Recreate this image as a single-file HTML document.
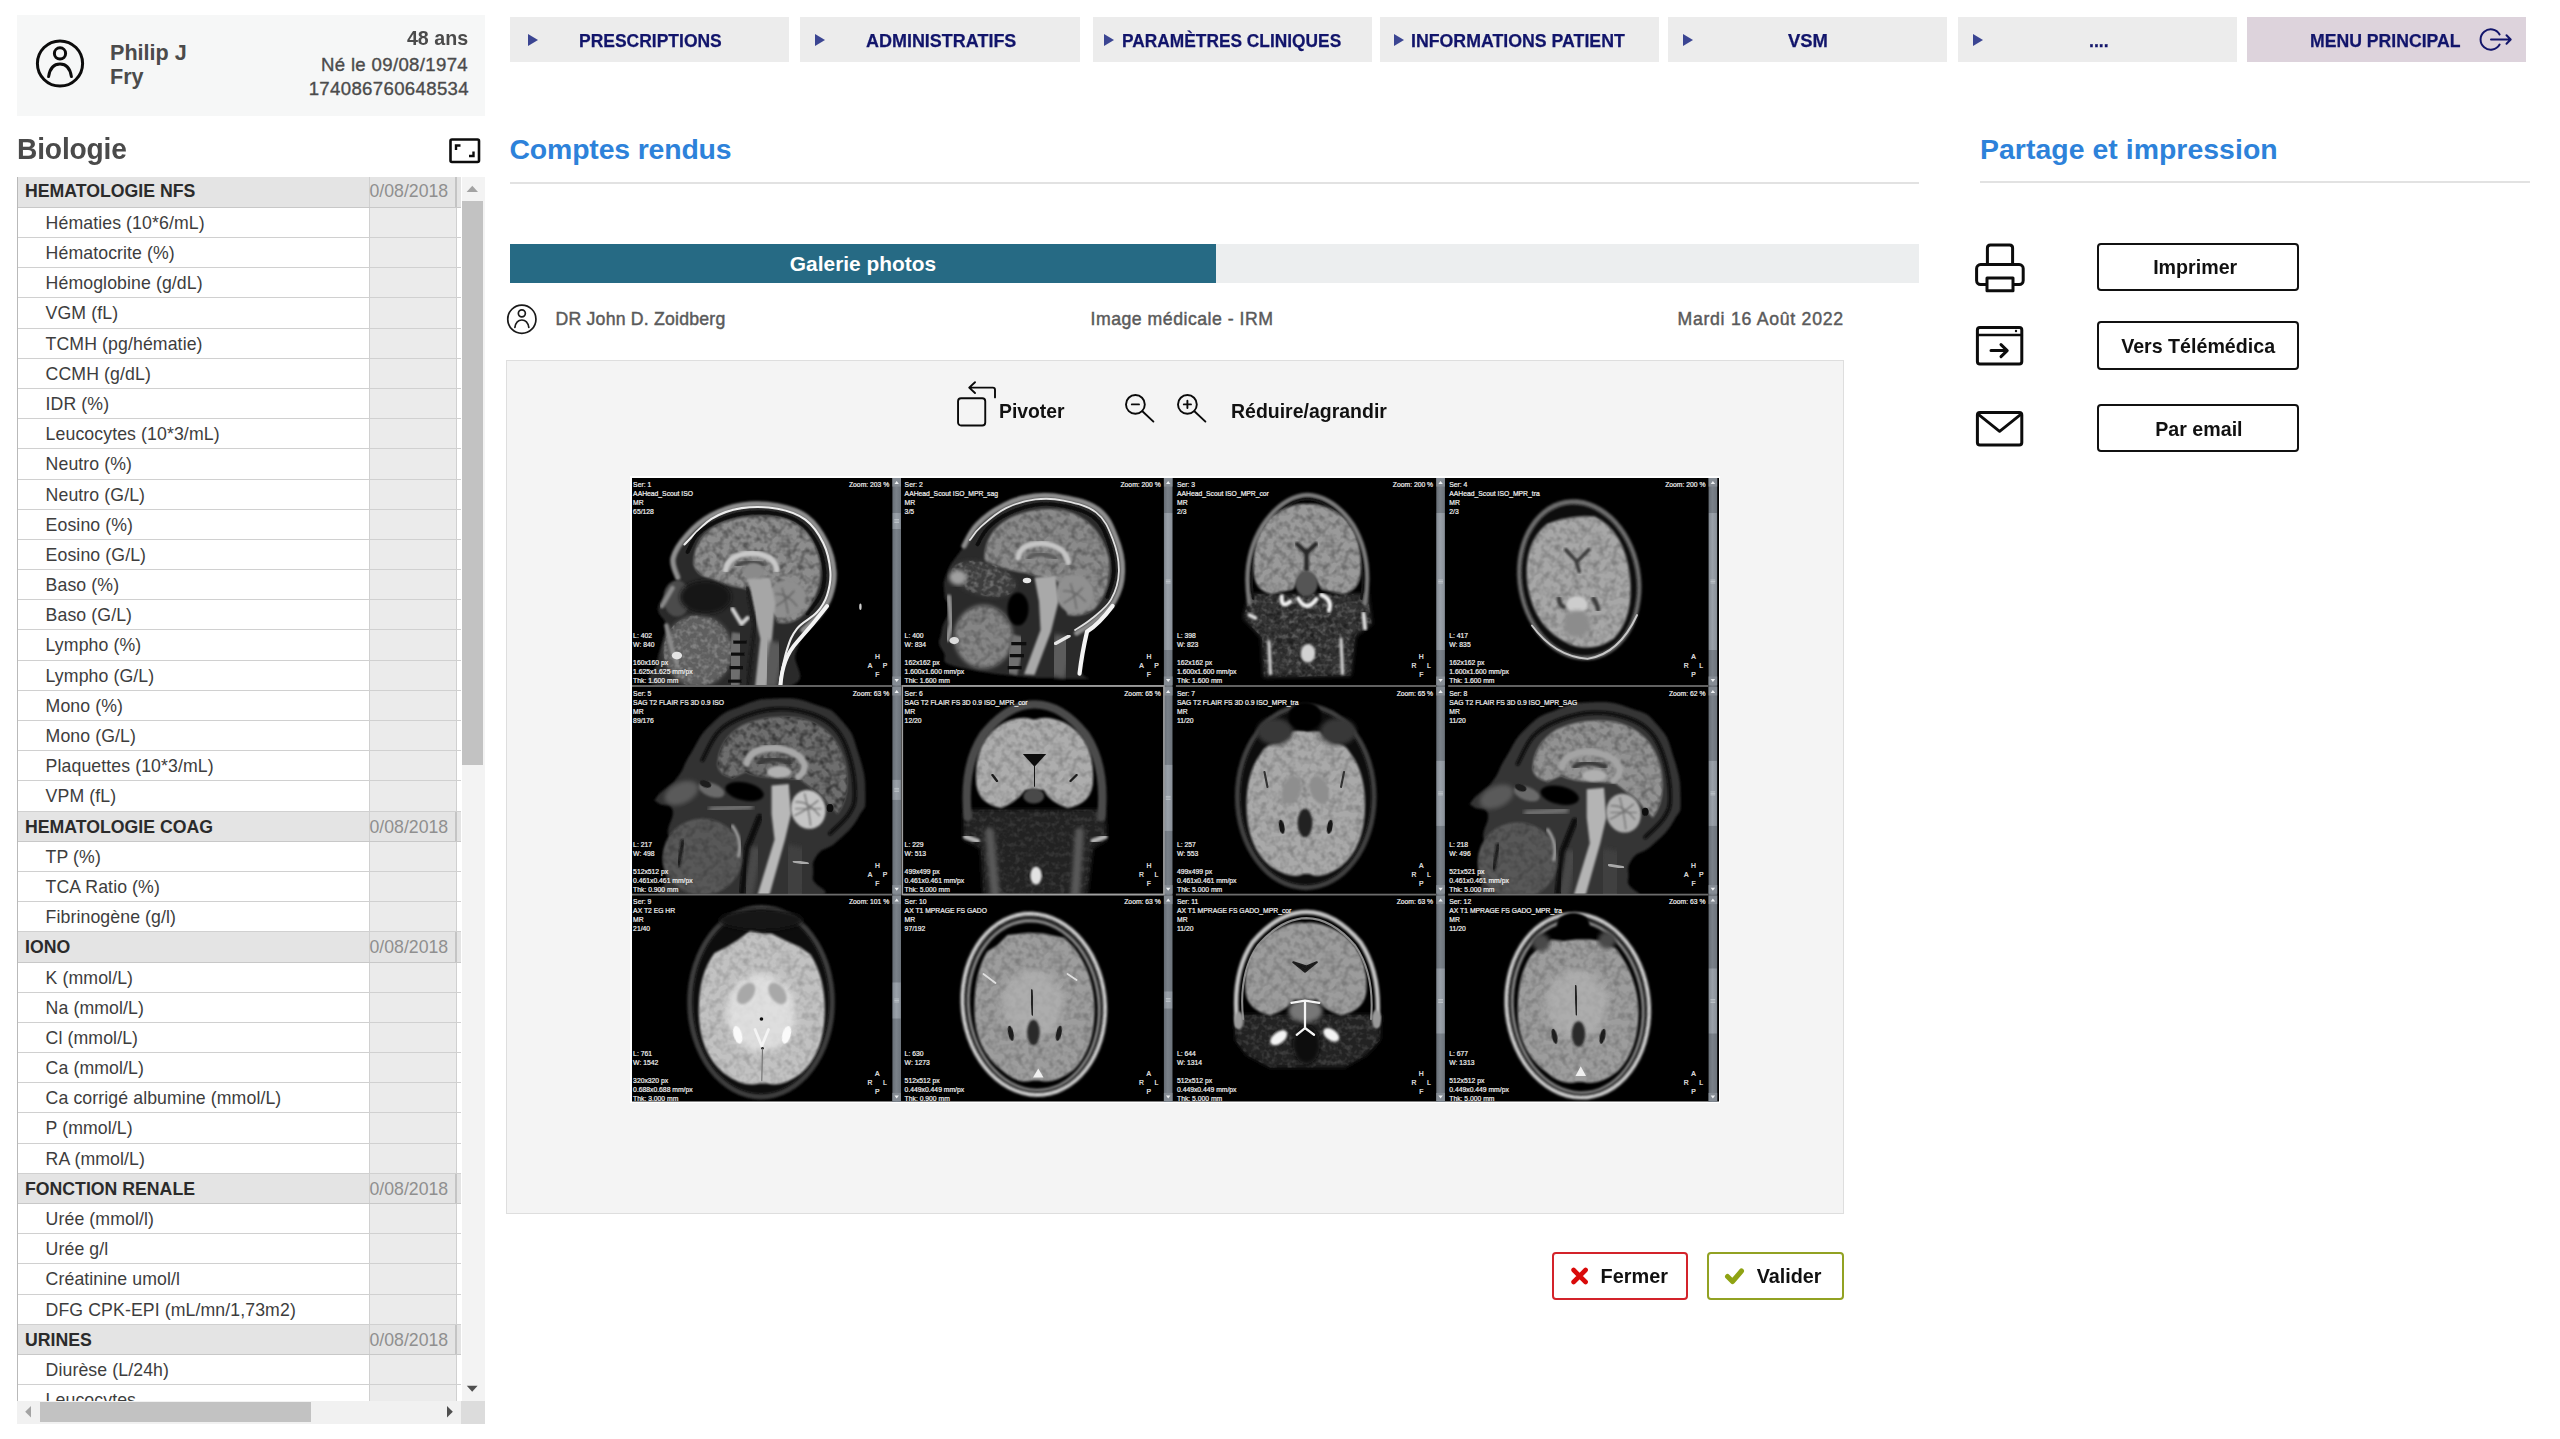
<!DOCTYPE html>
<html lang="fr">
<head>
<meta charset="utf-8">
<title>Comptes rendus</title>
<style>
*{box-sizing:border-box;margin:0;padding:0}
html,body{width:2560px;height:1439px;overflow:hidden;background:#fff}
body{font-family:"Liberation Sans",sans-serif;color:#4a4a4a;position:relative}
.abs{position:absolute}
.t{position:absolute;white-space:nowrap;line-height:1}
/* patient card */
#card{left:17px;top:15px;width:468px;height:101px;background:#f6f7f7}
/* nav */
.nav{position:absolute;top:17px;height:45px;background:#ececec;color:#12156b;font-weight:bold;font-size:18.6px;-webkit-text-stroke:.25px #12156b}
.nav .tri{position:absolute;top:16.5px;width:0;height:0;border-left:10.5px solid #3b4592;border-top:6.7px solid transparent;border-bottom:6.7px solid transparent}
.nav .lb{position:absolute;top:0;height:45px;line-height:47.4px;white-space:nowrap;display:inline-block;transform-origin:left center}
h2.ttl{position:absolute;letter-spacing:-.15px;font-size:28.4px;font-weight:bold;color:#2d82da;white-space:nowrap;line-height:1}
.hr{position:absolute;height:2px;background:#e2e2e2}
/* table */
#tbl{left:17px;top:176.9px;width:443.6px;height:1223.7px;overflow:hidden;border-left:1.3px solid #b9b9b9}
.row{position:relative;height:30.19px;border-bottom:1.3px solid #d0d0d0;font-size:17.7px;color:#3d3d3d;white-space:nowrap}
.row .n{position:absolute;left:27.6px;top:0;line-height:30.7px;letter-spacing:.1px}
.row .c{position:absolute;left:350.5px;top:0;bottom:0;width:88px;background:#ebebeb;border-left:1.3px solid #d0d0d0;border-right:1.3px solid #d0d0d0}
.row.h{background:#e4e4e4;font-weight:bold;color:#2b2b2b;border-bottom:1.3px solid #c8c8c8}
.row.h .n{left:7px;letter-spacing:0;line-height:30.4px}
.row.h .c{background:#e4e4e4;font-weight:normal;color:#8f8f8f;line-height:30.6px;text-indent:0px;border-right:2px solid #c4c4c4}
.m{font-size:17.7px;color:#5a5a5a;-webkit-text-stroke:.45px #5a5a5a;letter-spacing:.2px}
.b20{font-size:20.2px;font-weight:bold;color:#111}
.sx{display:inline-block;position:relative;transform:scaleX(.973)}
.row:first-child{height:30.95px}
.row:first-child .n,.row.h:first-child .c{line-height:29.6px}
.btn{position:absolute;border:2px solid #111;border-radius:4px;background:#fff;color:#111;font-weight:bold;font-size:20.2px;text-align:center;white-space:nowrap}
</style>
</head>
<body>

<!-- patient card -->
<div id="card" class="abs"></div>
<svg class="abs" style="left:33px;top:37px" width="54" height="54" viewBox="0 0 54 54" fill="none" stroke="#0c0c0c" stroke-width="3" stroke-linecap="round">
  <circle cx="27" cy="26.5" r="22.6"/>
  <circle cx="27" cy="16.4" r="5.6"/>
  <path d="M15.6 39.6 C16.8 31.5 21 27 27 27 C33 27 37.2 31.5 38.4 39.6"/>
</svg>
<div class="t" style="left:110px;top:40.5px;font-size:21.6px;font-weight:bold;line-height:24px;white-space:normal;width:120px;color:#4b4b4b">Philip J<br>Fry</div>
<div class="t" style="right:2092px;top:28px;font-size:20.6px;font-weight:bold;color:#4b4b4b;transform:scaleX(.955);transform-origin:right center">48 ans</div>
<div class="t" style="right:2092px;top:55.5px;font-size:18.6px;color:#4b4b4b;-webkit-text-stroke:.35px #4b4b4b;letter-spacing:.34px">Né le 09/08/1974</div>
<div class="t" style="right:2091px;top:80px;font-size:18.6px;color:#4b4b4b;-webkit-text-stroke:.35px #4b4b4b;letter-spacing:.35px">174086760648534</div>

<!-- nav -->
<div class="nav" style="left:510px;width:279px"><i class="tri" style="left:18px"></i><span class="lb" style="left:68.5px;transform:scaleX(.94)">PRESCRIPTIONS</span></div>
<div class="nav" style="left:800px;width:279.5px"><i class="tri" style="left:15px"></i><span class="lb" style="left:66.2px;transform:scaleX(.966)">ADMINISTRATIFS</span></div>
<div class="nav" style="left:1093px;width:279px"><i class="tri" style="left:10.5px"></i><span class="lb" style="left:29px;transform:scaleX(.932)">PARAMÈTRES CLINIQUES</span></div>
<div class="nav" style="left:1379.5px;width:279px"><i class="tri" style="left:14.5px"></i><span class="lb" style="left:31.5px;transform:scaleX(.954)">INFORMATIONS PATIENT</span></div>
<div class="nav" style="left:1668px;width:279px"><i class="tri" style="left:15px"></i><span class="lb" style="left:120px;transform:scaleX(.99)">VSM</span></div>
<div class="nav" style="left:1958.4px;width:278.8px"><i class="tri" style="left:15px"></i><span class="lb" style="left:130.5px;transform:scaleX(.95)">....</span></div>
<div class="nav" style="left:2247px;width:278.8px;background:#ddd3dc"><span class="lb" style="left:63.4px;transform:scaleX(.948)">MENU PRINCIPAL</span>
  <svg class="abs" style="left:230px;top:10px" width="38" height="26" viewBox="0 0 38 26" fill="none" stroke="#12156b" stroke-width="2" stroke-linecap="round" stroke-linejoin="round">
    <path d="M22.6 7.4 A10.2 10.2 0 1 0 22.6 17.6"/>
    <path d="M14 12.5 H33.5 M29.5 8.3 L33.7 12.5 L29.5 16.7"/>
  </svg>
</div>

<!-- left: Biologie -->
<h2 class="ttl" style="left:17px;top:134px;color:#4a4a4a;font-size:29.4px;transform:scaleX(.957);transform-origin:left center">Biologie</h2>
<svg class="abs" style="left:449px;top:138px" width="32" height="26" viewBox="0 0 32 26" fill="none" stroke="#0c0c0c">
  <rect x="1.5" y="1.5" width="28.5" height="22.5" rx="1.5" stroke-width="2.6"/>
  <path d="M7 12 V7.5 H11.5 M24.5 13.5 V18 H20" stroke-width="2.4"/>
</svg>

<div id="tbl" class="abs">
<div class="row h"><span class="n">HEMATOLOGIE NFS</span><span class="c">0/08/2018</span></div>
<div class="row"><span class="n">Hématies (10*6/mL)</span><span class="c"></span></div>
<div class="row"><span class="n">Hématocrite (%)</span><span class="c"></span></div>
<div class="row"><span class="n">Hémoglobine (g/dL)</span><span class="c"></span></div>
<div class="row"><span class="n">VGM (fL)</span><span class="c"></span></div>
<div class="row"><span class="n">TCMH (pg/hématie)</span><span class="c"></span></div>
<div class="row"><span class="n">CCMH (g/dL)</span><span class="c"></span></div>
<div class="row"><span class="n">IDR (%)</span><span class="c"></span></div>
<div class="row"><span class="n">Leucocytes (10*3/mL)</span><span class="c"></span></div>
<div class="row"><span class="n">Neutro (%)</span><span class="c"></span></div>
<div class="row"><span class="n">Neutro (G/L)</span><span class="c"></span></div>
<div class="row"><span class="n">Eosino (%)</span><span class="c"></span></div>
<div class="row"><span class="n">Eosino (G/L)</span><span class="c"></span></div>
<div class="row"><span class="n">Baso (%)</span><span class="c"></span></div>
<div class="row"><span class="n">Baso (G/L)</span><span class="c"></span></div>
<div class="row"><span class="n">Lympho (%)</span><span class="c"></span></div>
<div class="row"><span class="n">Lympho (G/L)</span><span class="c"></span></div>
<div class="row"><span class="n">Mono (%)</span><span class="c"></span></div>
<div class="row"><span class="n">Mono (G/L)</span><span class="c"></span></div>
<div class="row"><span class="n">Plaquettes (10*3/mL)</span><span class="c"></span></div>
<div class="row"><span class="n">VPM (fL)</span><span class="c"></span></div>
<div class="row h"><span class="n">HEMATOLOGIE COAG</span><span class="c">0/08/2018</span></div>
<div class="row"><span class="n">TP (%)</span><span class="c"></span></div>
<div class="row"><span class="n">TCA Ratio (%)</span><span class="c"></span></div>
<div class="row"><span class="n">Fibrinogène (g/l)</span><span class="c"></span></div>
<div class="row h"><span class="n">IONO</span><span class="c">0/08/2018</span></div>
<div class="row"><span class="n">K (mmol/L)</span><span class="c"></span></div>
<div class="row"><span class="n">Na (mmol/L)</span><span class="c"></span></div>
<div class="row"><span class="n">Cl (mmol/L)</span><span class="c"></span></div>
<div class="row"><span class="n">Ca (mmol/L)</span><span class="c"></span></div>
<div class="row"><span class="n">Ca corrigé albumine (mmol/L)</span><span class="c"></span></div>
<div class="row"><span class="n">P (mmol/L)</span><span class="c"></span></div>
<div class="row"><span class="n">RA (mmol/L)</span><span class="c"></span></div>
<div class="row h"><span class="n">FONCTION RENALE</span><span class="c">0/08/2018</span></div>
<div class="row"><span class="n">Urée (mmol/l)</span><span class="c"></span></div>
<div class="row"><span class="n">Urée g/l</span><span class="c"></span></div>
<div class="row"><span class="n">Créatinine umol/l</span><span class="c"></span></div>
<div class="row"><span class="n">DFG CPK-EPI (mL/mn/1,73m2)</span><span class="c"></span></div>
<div class="row h"><span class="n">URINES</span><span class="c">0/08/2018</span></div>
<div class="row"><span class="n">Diurèse (L/24h)</span><span class="c"></span></div>
<div class="row"><span class="n">Leucocytes</span><span class="c"></span></div>
</div>


<!-- scrollbars -->
<div class="abs" style="left:462px;top:177px;width:22.5px;height:1224px;background:#f3f3f3"></div>
<div class="abs" style="left:462px;top:200.5px;width:20.7px;height:564.7px;background:#c2c2c2"></div>
<svg class="abs" style="left:466px;top:185px" width="13" height="8" viewBox="0 0 13 8"><path d="M6.3 0.8 L12 7 H0.6 Z" fill="#a3a3a3"/></svg>
<svg class="abs" style="left:466px;top:1384.5px" width="13" height="8" viewBox="0 0 13 8"><path d="M0.8 0.8 H11.6 L6.2 6.8 Z" fill="#4f4f4f"/></svg>
<div class="abs" style="left:16.5px;top:1400.7px;width:468px;height:23px;background:#f1f1f1"></div>
<div class="abs" style="left:461px;top:1400.7px;width:23.5px;height:23px;background:#dcdcdc"></div>
<div class="abs" style="left:40px;top:1402.2px;width:271px;height:20px;background:#c2c2c2"></div>
<svg class="abs" style="left:24px;top:1405px" width="8" height="14" viewBox="0 0 8 14"><path d="M7 1 V12.4 L1.2 6.7 Z" fill="#a3a3a3"/></svg>
<svg class="abs" style="left:445.5px;top:1405px" width="8" height="14" viewBox="0 0 8 14"><path d="M1 1 V12.4 L6.8 6.7 Z" fill="#4f4f4f"/></svg>

<!-- center -->
<h2 class="ttl" style="left:509.5px;top:134.5px">Comptes rendus</h2>
<div class="hr" style="left:510px;top:181.5px;width:1409px"></div>


<!-- tab bar -->
<div class="abs" style="left:510px;top:243.5px;width:1409px;height:39.5px;background:#eceeef"></div>
<div class="abs" style="left:510px;top:243.5px;width:706px;height:39.5px;background:#266a84;color:#fff;font-weight:bold;font-size:20.9px;text-align:center;line-height:39.4px">Galerie photos</div>

<!-- doctor row -->
<svg class="abs" style="left:506px;top:304px" width="32" height="32" viewBox="0 0 32 32" fill="none" stroke="#1a1a1a" stroke-width="1.7" stroke-linecap="round">
  <circle cx="15.85" cy="15.2" r="14.1"/>
  <circle cx="15.85" cy="9.3" r="3.5"/>
  <path d="M8.9 23.4 C9.7 18.6 12.2 16 15.85 16 C19.5 16 22 18.6 22.8 23.4"/>
</svg>
<div class="t m" style="left:555.5px;top:310.6px">DR John D. Zoidberg</div>
<div class="t m" style="left:1090.5px;top:311px;letter-spacing:.5px">Image médicale - IRM</div>
<div class="t m" style="right:716.2px;top:311px;letter-spacing:.72px">Mardi 16 Août 2022</div>

<!-- viewer panel -->
<div class="abs" style="left:506px;top:360px;width:1337.6px;height:853.7px;background:#f4f4f4;border:1.3px solid #dedede"></div>

<!-- toolbar -->
<svg class="abs" style="left:954px;top:379.3px" width="46" height="52" viewBox="0 0 46 52" fill="none" stroke="#0a0a0a" stroke-width="1.9" stroke-linecap="round" stroke-linejoin="round">
  <rect x="4.05" y="19.2" width="27.2" height="27.3" rx="3"/>
  <path d="M41 18.4 V10.8 Q41 8.6 38.8 8.6 H15.6 M21 3.2 L15.2 8.6 L21 14"/>
</svg>
<div class="t b20" style="left:999px;top:400.9px;transform:scaleX(.958);transform-origin:left center">Pivoter</div>
<svg class="abs" style="left:1122px;top:390px" width="36" height="36" viewBox="0 0 36 36" fill="none" stroke="#0a0a0a" stroke-width="1.9" stroke-linecap="round">
  <circle cx="13.4" cy="14.4" r="9.4"/><path d="M20.4 21.2 L31.4 31.6 M9.8 14.4 H17"/>
</svg>
<svg class="abs" style="left:1173.5px;top:390px" width="36" height="36" viewBox="0 0 36 36" fill="none" stroke="#0a0a0a" stroke-width="1.9" stroke-linecap="round">
  <circle cx="13.4" cy="14.4" r="9.4"/><path d="M20.4 21.2 L31.4 31.6 M9.8 14.4 H17 M13.4 10.8 V18"/>
</svg>
<div class="t b20" style="left:1231px;top:400.9px;transform:scaleX(.965);transform-origin:left center">Réduire/agrandir</div>

<!-- MRI -->
<div id="mri" class="abs" style="left:630px;top:476.4px;width:1090.2px;height:626.9px;background:#fff;overflow:hidden">
<svg class="abs" style="left:1.6px;top:1.7px" width="1087.2" height="623.5" viewBox="0 0 1087.2 623.5" font-family="Liberation Sans, sans-serif">

<defs>
<filter id="b1" x="-10%" y="-10%" width="120%" height="120%"><feGaussianBlur stdDeviation="7"/></filter>
<filter id="b2" x="-10%" y="-10%" width="120%" height="120%"><feGaussianBlur stdDeviation="14"/></filter>
<filter id="b0" x="-10%" y="-10%" width="120%" height="120%"><feGaussianBlur stdDeviation="3.5"/></filter>
<filter id="b3" x="-20%" y="-20%" width="140%" height="140%"><feGaussianBlur stdDeviation="26"/></filter>
<filter id="tx" x="0" y="0" width="100%" height="100%"><feTurbulence type="fractalNoise" baseFrequency="0.022" numOctaves="2" seed="7"/><feColorMatrix values="0 0 0 0 0  0 0 0 0 0  0 0 0 0 0  2.4 0 0 0 -0.95"/><feComposite in2="SourceGraphic" operator="in"/><feGaussianBlur stdDeviation="5"/></filter>
<filter id="tx2" x="0" y="0" width="100%" height="100%"><feTurbulence type="fractalNoise" baseFrequency="0.03" numOctaves="2" seed="11"/><feColorMatrix values="0 0 0 0 1  0 0 0 0 1  0 0 0 0 1  2.8 0 0 0 -1.2"/><feComposite in2="SourceGraphic" operator="in"/><feGaussianBlur stdDeviation="5"/></filter>
<linearGradient id="sbg" x1="0" x2="1" y1="0" y2="0"><stop offset="0" stop-color="#666d75"/><stop offset=".45" stop-color="#7a8189"/><stop offset="1" stop-color="#6c737b"/></linearGradient>
<linearGradient id="sbt" x1="0" x2="1" y1="0" y2="0"><stop offset="0" stop-color="#858c94"/><stop offset=".45" stop-color="#9aa1a9"/><stop offset="1" stop-color="#8a9199"/></linearGradient>
</defs>

<rect width="1087.2" height="623.5" fill="#000"/>
<clipPath id="c00"><rect x="0" y="0" width="260.4" height="207.1"/></clipPath>
<g transform="translate(0,0)">
<g clip-path="url(#c00)"><g transform="scale(0.15013) translate(-30.6,-27.3)"><path d="M330 700 C349 636 286 620 300 560 C314 500 348 458 400 400 C452 342 488 310 560 270 C632 230 672 213 760 200 C848 187 912 189 1000 205 C1088 221 1134 231 1200 280 C1266 329 1293 376 1330 450 C1367 524 1379 576 1385 650 C1391 724 1379 762 1360 820 C1341 878 1324 896 1290 940 C1256 984 1224 988 1190 1040 C1156 1092 1146 1124 1120 1200 C1094 1276 1239 1376 1060 1420 C881 1464 397 1454 225 1420 C53 1386 197 1314 200 1250 C203 1186 229 1150 240 1100 C251 1050 262 1044 255 1000 C248 956 190 940 205 880 C220 820 311 764 330 700 Z" fill="#2b2b2b" filter="url(#b1)"/><path d="M335 690 C330 666 293 612 305 560 C317 508 353 457 400 405 C447 353 494 313 560 277 C626 241 679 220 760 208 C841 196 920 198 1000 213 C1080 228 1136 244 1195 288 C1254 332 1289 389 1322 455 C1355 521 1370 584 1375 650 C1380 716 1367 763 1350 815 C1333 867 1313 894 1280 935 C1247 976 1190 1021 1170 1040" fill="none" stroke="#8e8e8e" stroke-width="36" stroke-linecap="round" stroke-linejoin="round" filter="url(#b1)"/><path d="M380 470 C413 439 490 344 560 300 C630 256 679 240 760 228 C841 216 922 218 1000 232 C1078 246 1129 263 1185 305 C1241 347 1274 399 1305 462 C1336 525 1347 587 1352 650 C1357 713 1346 758 1330 808 C1314 858 1299 881 1262 922 C1225 963 1167 983 1130 1030 C1093 1077 1082 1110 1060 1180 C1038 1250 1019 1368 1010 1410" fill="none" stroke="#ededed" stroke-width="14" stroke-linecap="round" stroke-linejoin="round" filter="url(#b0)"/><path d="M1330 880 Q1230 1010 1130 1120 T1020 1410" fill="none" stroke="#f4f4f4" stroke-width="26" stroke-linecap="round" stroke-linejoin="round" filter="url(#b0)"/><path d="M400 520 C413 498 433 438 470 400 C507 362 543 340 600 315 C657 290 708 271 780 262 C852 253 920 252 990 265 C1060 278 1109 296 1160 335 C1211 374 1242 422 1270 480 C1298 538 1308 591 1312 650 C1316 709 1311 749 1290 800 C1269 851 1216 906 1200 930" fill="none" stroke="#101010" stroke-width="26" stroke-linecap="round" stroke-linejoin="round" filter="url(#b0)"/><path d="M440 600 Q440 400 640 320 Q820 260 1020 290 Q1240 340 1285 600 Q1300 780 1180 930 Q1100 1010 1000 990 L930 800 L760 760 Q640 740 560 700 Q460 680 440 600 Z" fill="#8d8d8d" filter="url(#b1)"/><path d="M440 600 Q440 400 640 320 Q820 260 1020 290 Q1240 340 1285 600 Q1300 780 1180 930 Q1100 1010 1000 990 L930 800 L760 760 Q640 740 560 700 Q460 680 440 600 Z" fill="#000" filter="url(#tx)" opacity="0.38"/><path d="M655 640 Q670 535 830 528 Q985 540 995 640" fill="none" stroke="#c9c9c9" stroke-width="38" stroke-linecap="round" stroke-linejoin="round" filter="url(#b1)"/><path d="M730 610 Q800 570 900 600" fill="none" stroke="#4a4a4a" stroke-width="30" stroke-linecap="round" stroke-linejoin="round" filter="url(#b1)"/><ellipse cx="840" cy="650" rx="70" ry="55" fill="#8a8a8a" filter="url(#b1)"/><ellipse cx="1060" cy="830" rx="130" ry="120" fill="#8e8e8e" transform="rotate(-30 1060 830)" filter="url(#b1)"/><path d="M985 800 Q1060 790 1130 880 M990 880 Q1060 840 1110 780 M1030 760 Q1060 850 1070 930" fill="none" stroke="#5e5e5e" stroke-width="8" stroke-linecap="round" stroke-linejoin="round" filter="url(#b1)"/><path d="M800 700 L950 690 L985 860 L965 1080 L930 1420 L850 1420 L885 1100 L840 900 Z" fill="#a6a6a6" filter="url(#b1)"/><path d="M800 760 L850 1000 L800 1420" fill="none" stroke="#1a1a1a" stroke-width="26" stroke-linecap="round" stroke-linejoin="round" filter="url(#b1)"/><ellipse cx="470" cy="1180" rx="230" ry="240" fill="#5e5e5e" filter="url(#b2)"/><ellipse cx="470" cy="1180" rx="230" ry="240" fill="#fff" filter="url(#tx2)" opacity="0.22"/><ellipse cx="330" cy="830" rx="90" ry="120" fill="#4c4c4c" filter="url(#b1)"/><ellipse cx="520" cy="820" rx="170" ry="110" fill="#161616" filter="url(#b2)"/><path d="M230 880 L300 760 M260 1010 L300 1180 L330 1260" fill="none" stroke="#8a8a8a" stroke-width="30" stroke-linecap="round" stroke-linejoin="round" filter="url(#b1)"/><path d="M700 900 L760 1000 L800 960" fill="none" stroke="#d0d0d0" stroke-width="28" stroke-linecap="round" stroke-linejoin="round" filter="url(#b1)"/><ellipse cx="330" cy="1210" rx="34" ry="26" fill="#e4e4e4" filter="url(#b0)"/><path d="M740 1060 L700 1420" fill="none" stroke="#6e6e6e" stroke-width="90" stroke-linecap="butt" stroke-linejoin="round" filter="url(#b1)"/><path d="M705 1120 h90 M690 1200 h90 M680 1290 h90 M670 1380 h90" fill="none" stroke="#111" stroke-width="22" stroke-linecap="butt" stroke-linejoin="round" filter="url(#b0)"/><path d="M1000 1120 L940 1420" fill="none" stroke="#5a5a5a" stroke-width="110" stroke-linecap="butt" stroke-linejoin="round" filter="url(#b2)"/><ellipse cx="1552" cy="885" rx="8" ry="22" fill="#cfcfcf" filter="url(#b0)"/></g></g>
<g transform="scale(0.87 1)" font-size="7.8" fill="#f2f2f2" stroke="#f2f2f2" stroke-width=".22"><text x="1.3" y="9.0">Ser: 1</text><text x="1.3" y="17.9">AAHead_Scout ISO</text><text x="1.3" y="26.9">MR</text><text x="1.3" y="35.9">65/128</text><text x="295.7" y="9" text-anchor="end">Zoom: 203 %</text><text x="1.3" y="160.4">L: 402</text><text x="1.3" y="169.4">W: 840</text><text x="1.3" y="187.5">160x160 px</text><text x="1.3" y="196.5">1.625x1.625 mm/px</text><text x="1.3" y="205.4">Thk: 1.600 mm</text><text x="282.0" y="181" text-anchor="middle">H</text><text x="273.6" y="190" text-anchor="middle">A</text><text x="290.8" y="190" text-anchor="middle">P</text><text x="282.0" y="199" text-anchor="middle">F</text></g>
<rect x="260.4" y="0" width="8.6" height="208.9" fill="url(#sbg)"/><rect x="260.4" y="0" width="8.6" height="8.6" fill="#858c94"/><path d="M262.5 6 L264.7 3 L266.9 6 Z" fill="#eef0f2"/><rect x="260.4" y="198.5" width="8.6" height="8.6" fill="#858c94"/><path d="M262.5 201.1 L264.7 204.1 L266.9 201.1 Z" fill="#eef0f2"/><rect x="260.7" y="35" width="8.0" height="16" fill="url(#sbt)"/><path d="M262.29999999999995 41.5 h4.8 M262.29999999999995 43.0 h4.8 M262.29999999999995 44.5 h4.8" stroke="#d4d8dc" stroke-width=".6"/>
<rect x="0" y="207.1" width="260.4" height="1.8" fill="#6c6c6c"/>
</g>
<clipPath id="c01"><rect x="0" y="0" width="260.4" height="207.1"/></clipPath>
<g transform="translate(271.5,0)">
<g clip-path="url(#c01)"><g transform="scale(0.15013) translate(-27.3,-27.3)"><path d="M430 480 C483 395 448 405 520 330 C592 255 599 251 700 200 C801 149 793 153 900 140 C1007 127 985 126 1100 150 C1215 174 1237 158 1330 230 C1423 302 1406 308 1450 420 C1494 532 1498 535 1495 650 C1492 765 1492 759 1440 850 C1388 941 1353 929 1300 990 C1247 1051 1263 997 1240 1080 C1217 1163 1236 1224 1215 1300 C1194 1376 1364 1365 1160 1365 C956 1365 682 1349 450 1300 C218 1251 335 1247 290 1180 C245 1113 269 1125 280 1050 C291 975 325 967 330 900 C335 833 303 867 300 800 C297 733 285 735 320 650 C355 565 377 565 430 480 Z" fill="#2b2b2b" filter="url(#b1)"/><path d="M430 480 C446 453 470 385 520 335 C570 285 630 241 700 207 C770 173 827 157 900 148 C973 139 1022 142 1100 158 C1178 174 1262 189 1325 238 C1388 287 1412 348 1442 424 C1472 500 1488 573 1486 650 C1484 727 1467 785 1432 846 C1397 907 1342 943 1296 982 C1250 1021 1201 1046 1180 1060" fill="none" stroke="#8e8e8e" stroke-width="34" stroke-linecap="round" stroke-linejoin="round" filter="url(#b1)"/><path d="M470 440 C484 424 501 389 545 350 C589 311 644 261 710 228 C776 195 834 179 905 170 C976 161 1021 162 1095 178 C1169 194 1250 209 1310 256 C1370 303 1392 360 1420 432 C1448 504 1464 576 1462 650 C1460 724 1443 778 1410 836 C1377 894 1324 928 1280 965 C1236 1002 1190 1026 1170 1040" fill="none" stroke="#e2e2e2" stroke-width="12" stroke-linecap="round" stroke-linejoin="round" filter="url(#b0)"/><path d="M1420 880 Q1330 1000 1250 1050 Q1215 1200 1200 1330" fill="none" stroke="#f4f4f4" stroke-width="28" stroke-linecap="round" stroke-linejoin="round" filter="url(#b0)"/><path d="M520 470 C533 450 552 398 590 360 C628 322 671 290 730 262 C789 234 845 214 910 205 C975 196 1015 197 1085 212 C1155 227 1234 242 1290 285 C1346 328 1365 378 1390 445 C1415 512 1429 581 1428 650 C1427 719 1393 789 1385 820" fill="none" stroke="#0c0c0c" stroke-width="24" stroke-linecap="round" stroke-linejoin="round" filter="url(#b0)"/><path d="M565 560 Q570 380 740 290 Q900 215 1090 240 Q1330 300 1395 560 Q1420 760 1300 900 Q1220 960 1120 940 L1060 720 L840 660 Q700 640 640 610 Q570 600 565 560 Z" fill="#8a8a8a" filter="url(#b1)"/><path d="M565 560 Q570 380 740 290 Q900 215 1090 240 Q1330 300 1395 560 Q1420 760 1300 900 Q1220 960 1120 940 L1060 720 L840 660 Q700 640 640 610 Q570 600 565 560 Z" fill="#000" filter="url(#tx)" opacity="0.3"/><path d="M790 560 Q800 465 950 462 Q1110 480 1125 590" fill="none" stroke="#c6c6c6" stroke-width="36" stroke-linecap="round" stroke-linejoin="round" filter="url(#b1)"/><path d="M860 560 Q930 510 1040 560" fill="none" stroke="#5a5a5a" stroke-width="30" stroke-linecap="round" stroke-linejoin="round" filter="url(#b1)"/><ellipse cx="1170" cy="800" rx="125" ry="130" fill="#909090" transform="rotate(-20 1170 800)" filter="url(#b1)"/><path d="M1090 780 Q1170 770 1240 850 M1095 860 Q1170 820 1220 760 M1140 730 Q1170 820 1180 900" fill="none" stroke="#626262" stroke-width="8" stroke-linecap="round" stroke-linejoin="round" filter="url(#b1)"/><path d="M900 690 L1040 680 L1060 850 L1010 1050 L900 1340 L830 1335 L940 1040 L930 850 Z" fill="#a9a9a9" filter="url(#b1)"/><ellipse cx="560" cy="1085" rx="195" ry="210" fill="#858585" filter="url(#b2)"/><ellipse cx="560" cy="1085" rx="195" ry="210" fill="#000" filter="url(#tx)" opacity="0.25"/><ellipse cx="560" cy="700" rx="220" ry="110" fill="#3c3c3c" transform="rotate(15 560 700)" filter="url(#b2)"/><ellipse cx="560" cy="700" rx="220" ry="110" fill="#fff" transform="rotate(15 560 700)" filter="url(#tx2)" opacity="0.25"/><ellipse cx="390" cy="690" rx="60" ry="50" fill="#a0a0a0" filter="url(#b2)"/><ellipse cx="790" cy="900" rx="70" ry="110" fill="#050505" filter="url(#b1)"/><ellipse cx="850" cy="710" rx="28" ry="18" fill="#e8e8e8" filter="url(#b0)"/><path d="M330 820 L345 1000 L320 1100" fill="none" stroke="#909090" stroke-width="34" stroke-linecap="round" stroke-linejoin="round" filter="url(#b1)"/><ellipse cx="365" cy="1110" rx="32" ry="24" fill="#dcdcdc" filter="url(#b0)"/><path d="M800 1080 L740 1330" fill="none" stroke="#707070" stroke-width="90" stroke-linecap="butt" stroke-linejoin="round" filter="url(#b1)"/><path d="M745 1130 h100 M735 1210 h95 M720 1290 h95" fill="none" stroke="#111" stroke-width="22" stroke-linecap="butt" stroke-linejoin="round" filter="url(#b0)"/><path d="M1100 1080 L1040 1350" fill="none" stroke="#5c5c5c" stroke-width="130" stroke-linecap="butt" stroke-linejoin="round" filter="url(#b2)"/><path d="M1040 1130 L1130 1080" fill="none" stroke="#e6e6e6" stroke-width="22" stroke-linecap="round" stroke-linejoin="round" filter="url(#b0)"/></g></g>
<g transform="scale(0.87 1)" font-size="7.8" fill="#f2f2f2" stroke="#f2f2f2" stroke-width=".22"><text x="1.3" y="9.0">Ser: 2</text><text x="1.3" y="17.9">AAHead_Scout ISO_MPR_sag</text><text x="1.3" y="26.9">MR</text><text x="1.3" y="35.9">3/5</text><text x="295.7" y="9" text-anchor="end">Zoom: 200 %</text><text x="1.3" y="160.4">L: 400</text><text x="1.3" y="169.4">W: 834</text><text x="1.3" y="187.5">162x162 px</text><text x="1.3" y="196.5">1.600x1.600 mm/px</text><text x="1.3" y="205.4">Thk: 1.600 mm</text><text x="282.0" y="181" text-anchor="middle">H</text><text x="273.6" y="190" text-anchor="middle">A</text><text x="290.8" y="190" text-anchor="middle">P</text><text x="282.0" y="199" text-anchor="middle">F</text></g>
<rect x="260.4" y="0" width="8.6" height="208.9" fill="url(#sbg)"/><rect x="260.4" y="0" width="8.6" height="8.6" fill="#858c94"/><path d="M262.5 6 L264.7 3 L266.9 6 Z" fill="#eef0f2"/><rect x="260.4" y="198.5" width="8.6" height="8.6" fill="#858c94"/><path d="M262.5 201.1 L264.7 204.1 L266.9 201.1 Z" fill="#eef0f2"/><rect x="260.7" y="35" width="8.0" height="137" fill="url(#sbt)"/><path d="M262.29999999999995 102.0 h4.8 M262.29999999999995 103.5 h4.8 M262.29999999999995 105.0 h4.8" stroke="#d4d8dc" stroke-width=".6"/>
<rect x="0" y="207.1" width="260.4" height="1.8" fill="#6c6c6c"/>
</g>
<clipPath id="c02"><rect x="0" y="0" width="260.4" height="207.1"/></clipPath>
<g transform="translate(543.9,0)">
<g clip-path="url(#c02)"><g transform="scale(0.15013) translate(-30.0,-27.3)"><path d="M520 800 L1310 800 L1335 1000 L1225 1080 L1195 1345 L615 1355 L600 1090 L480 960 Z" fill="#343434" filter="url(#b2)"/><path d="M520 800 L1310 800 L1335 1000 L1225 1080 L1195 1345 L615 1355 L600 1090 L480 960 Z" fill="#fff" filter="url(#tx2)" opacity="0.2"/><path d="M520 800 L1310 800 L1335 1000 L1225 1080 L1195 1345 L615 1355 L600 1090 L480 960 Z" fill="#000" filter="url(#tx)" opacity="0.45"/><path d="M520 860 Q470 560 610 340 Q740 150 905 140 Q1080 150 1210 340 Q1340 560 1290 860" fill="none" stroke="#7c7c7c" stroke-width="30" stroke-linecap="round" stroke-linejoin="round" filter="url(#b1)"/><path d="M545 830 Q505 560 635 355 Q755 178 905 168 Q1060 178 1185 355 Q1305 560 1265 830" fill="none" stroke="#151515" stroke-width="16" stroke-linecap="round" stroke-linejoin="round" filter="url(#b0)"/><path d="M548 640 Q540 380 700 260 Q820 190 905 200 Q990 190 1110 260 Q1270 380 1262 640 Q1262 780 1140 800 L1000 770 L960 700 L850 700 L810 770 L670 800 Q548 780 548 640 Z" fill="#9a9a9a" filter="url(#b1)"/><path d="M548 640 Q540 380 700 260 Q820 190 905 200 Q990 190 1110 260 Q1270 380 1262 640 Q1262 780 1140 800 L1000 770 L960 700 L850 700 L810 770 L670 800 Q548 780 548 640 Z" fill="#000" filter="url(#tx)" opacity="0.28"/><path d="M838 468 L900 525 L962 468 M900 525 L900 640" fill="none" stroke="#262626" stroke-width="30" stroke-linecap="round" stroke-linejoin="round" filter="url(#b1)"/><ellipse cx="900" cy="730" rx="75" ry="85" fill="#555" filter="url(#b1)"/><path d="M735 815 Q730 900 790 850 M845 830 Q900 925 965 835 M1000 805 Q1075 840 1050 910" fill="none" stroke="#f2f2f2" stroke-width="28" stroke-linecap="round" stroke-linejoin="round" filter="url(#b1)"/><ellipse cx="910" cy="1195" rx="48" ry="62" fill="#d2d2d2" filter="url(#b1)"/><path d="M650 1120 L660 1330 M1130 1100 L1140 1330" fill="none" stroke="#cfcfcf" stroke-width="22" stroke-linecap="round" stroke-linejoin="round" filter="url(#b1)"/><path d="M520 940 L560 960 M1280 930 L1290 1030" fill="none" stroke="#ddd" stroke-width="26" stroke-linecap="round" stroke-linejoin="round" filter="url(#b1)"/></g></g>
<g transform="scale(0.87 1)" font-size="7.8" fill="#f2f2f2" stroke="#f2f2f2" stroke-width=".22"><text x="1.3" y="9.0">Ser: 3</text><text x="1.3" y="17.9">AAHead_Scout ISO_MPR_cor</text><text x="1.3" y="26.9">MR</text><text x="1.3" y="35.9">2/3</text><text x="295.7" y="9" text-anchor="end">Zoom: 200 %</text><text x="1.3" y="160.4">L: 398</text><text x="1.3" y="169.4">W: 823</text><text x="1.3" y="187.5">162x162 px</text><text x="1.3" y="196.5">1.600x1.600 mm/px</text><text x="1.3" y="205.4">Thk: 1.600 mm</text><text x="282.0" y="181" text-anchor="middle">H</text><text x="273.6" y="190" text-anchor="middle">R</text><text x="290.8" y="190" text-anchor="middle">L</text><text x="282.0" y="199" text-anchor="middle">F</text></g>
<rect x="260.4" y="0" width="8.6" height="208.9" fill="url(#sbg)"/><rect x="260.4" y="0" width="8.6" height="8.6" fill="#858c94"/><path d="M262.5 6 L264.7 3 L266.9 6 Z" fill="#eef0f2"/><rect x="260.4" y="198.5" width="8.6" height="8.6" fill="#858c94"/><path d="M262.5 201.1 L264.7 204.1 L266.9 201.1 Z" fill="#eef0f2"/><rect x="260.7" y="35" width="8.0" height="137" fill="url(#sbt)"/><path d="M262.29999999999995 102.0 h4.8 M262.29999999999995 103.5 h4.8 M262.29999999999995 105.0 h4.8" stroke="#d4d8dc" stroke-width=".6"/>
<rect x="0" y="207.1" width="260.4" height="1.8" fill="#6c6c6c"/>
</g>
<clipPath id="c03"><rect x="0" y="0" width="260.4" height="207.1"/></clipPath>
<g transform="translate(816.2,0)">
<g clip-path="url(#c03)"><g transform="scale(0.15013) translate(-32.0,-27.3)"><ellipse cx="905" cy="705" rx="410" ry="540" fill="#6c6c6c" transform="rotate(-10 905 705)" filter="url(#b1)"/><ellipse cx="905" cy="705" rx="388" ry="518" fill="#d0d0d0" transform="rotate(-5 905 705)" filter="url(#b1)" opacity="0.0"/><ellipse cx="905" cy="708" rx="380" ry="508" fill="#0e0e0e" transform="rotate(-10 905 708)" filter="url(#b1)"/><path d="M590 1010 Q740 1215 960 1232 Q1170 1200 1290 940" fill="none" stroke="#c8c8c8" stroke-width="13" stroke-linecap="round" stroke-linejoin="round" filter="url(#b0)"/><g transform="rotate(-7 900 720)"><path d="M560 700 Q560 420 740 310 Q900 270 1060 300 Q1245 420 1245 720 Q1240 1000 1090 1120 Q950 1200 800 1130 Q570 1000 560 700 Z" fill="#a7a7a7" filter="url(#b1)"/><path d="M560 700 Q560 420 740 310 Q900 270 1060 300 Q1245 420 1245 720 Q1240 1000 1090 1120 Q950 1200 800 1130 Q570 1000 560 700 Z" fill="#000" filter="url(#tx)" opacity="0.22"/></g><path d="M815 505 L890 585 L968 505 M885 585 L905 650" fill="none" stroke="#3a3a3a" stroke-width="24" stroke-linecap="round" stroke-linejoin="round" filter="url(#b1)"/><path d="M770 830 Q775 880 800 885 M1000 830 Q1030 880 1030 905" fill="none" stroke="#3c3c3c" stroke-width="30" stroke-linecap="round" stroke-linejoin="round" filter="url(#b1)"/><ellipse cx="890" cy="870" rx="70" ry="55" fill="#cdcdcd" filter="url(#b1)"/><ellipse cx="890" cy="1000" rx="90" ry="90" fill="#8c8c8c" filter="url(#b2)"/></g></g>
<g transform="scale(0.87 1)" font-size="7.8" fill="#f2f2f2" stroke="#f2f2f2" stroke-width=".22"><text x="1.3" y="9.0">Ser: 4</text><text x="1.3" y="17.9">AAHead_Scout ISO_MPR_tra</text><text x="1.3" y="26.9">MR</text><text x="1.3" y="35.9">2/3</text><text x="295.7" y="9" text-anchor="end">Zoom: 200 %</text><text x="1.3" y="160.4">L: 417</text><text x="1.3" y="169.4">W: 835</text><text x="1.3" y="187.5">162x162 px</text><text x="1.3" y="196.5">1.600x1.600 mm/px</text><text x="1.3" y="205.4">Thk: 1.600 mm</text><text x="282.0" y="181" text-anchor="middle">A</text><text x="273.6" y="190" text-anchor="middle">R</text><text x="290.8" y="190" text-anchor="middle">L</text><text x="282.0" y="199" text-anchor="middle">P</text></g>
<rect x="260.4" y="0" width="8.6" height="208.9" fill="url(#sbg)"/><rect x="260.4" y="0" width="8.6" height="8.6" fill="#858c94"/><path d="M262.5 6 L264.7 3 L266.9 6 Z" fill="#eef0f2"/><rect x="260.4" y="198.5" width="8.6" height="8.6" fill="#858c94"/><path d="M262.5 201.1 L264.7 204.1 L266.9 201.1 Z" fill="#eef0f2"/><rect x="260.7" y="35" width="8.0" height="137" fill="url(#sbt)"/><path d="M262.29999999999995 102.0 h4.8 M262.29999999999995 103.5 h4.8 M262.29999999999995 105.0 h4.8" stroke="#d4d8dc" stroke-width=".6"/>
<rect x="0" y="207.1" width="260.4" height="1.8" fill="#6c6c6c"/>
</g>
<clipPath id="c10"><rect x="0" y="0" width="260.4" height="206.8"/></clipPath>
<g transform="translate(0,208.9)">
<g clip-path="url(#c10)"><g transform="scale(0.15013) translate(-30.6,-33.3)"><g transform="translate(0,0)"><path d="M420 480 C481 384 469 365 560 280 C651 195 643 205 760 160 C877 115 869 113 1000 110 C1131 107 1135 110 1250 150 C1365 190 1353 172 1430 260 C1507 348 1499 349 1540 480 C1581 611 1585 638 1585 750 C1585 862 1589 817 1540 900 C1491 983 1475 991 1400 1060 C1325 1129 1304 1096 1260 1160 C1216 1224 1248 1225 1235 1300 C1222 1375 1451 1403 1210 1440 C969 1477 583 1477 330 1440 C77 1403 284 1377 260 1300 C236 1223 229 1217 240 1150 C251 1083 292 1090 300 1050 C308 1010 270 1053 270 1000 C270 947 316 901 300 850 C284 799 237 834 210 810 C183 786 168 805 200 760 C232 715 271 715 330 640 C389 565 359 576 420 480 Z" fill="#323232" filter="url(#b1)"/><path d="M500 520 C520 485 557 384 610 330 C663 276 718 252 790 225 C862 198 919 182 1000 180 C1081 178 1158 190 1230 215 C1302 240 1344 263 1390 315 C1436 367 1457 420 1480 500 C1503 580 1516 680 1515 750 C1514 820 1505 832 1475 880 C1445 928 1373 986 1350 1010" fill="none" stroke="#0a0a0a" stroke-width="26" stroke-linecap="round" stroke-linejoin="round" filter="url(#b1)"/><path d="M600 560 Q600 390 760 290 Q930 210 1150 240 Q1400 300 1455 560 Q1490 760 1400 880 L1290 760 L1150 650 L1010 640 Q860 640 790 600 L700 640 Q610 620 600 560 Z" fill="#6e6e6e" filter="url(#b1)"/><path d="M600 560 Q600 390 760 290 Q930 210 1150 240 Q1400 300 1455 560 Q1490 760 1400 880 L1290 760 L1150 650 L1010 640 Q860 640 790 600 L700 640 Q610 620 600 560 Z" fill="#000" filter="url(#tx)" opacity="0.5"/><path d="M795 540 Q820 440 980 440 Q1160 460 1180 560 Q1175 610 1140 630" fill="none" stroke="#a8a8a8" stroke-width="46" stroke-linecap="round" stroke-linejoin="round" filter="url(#b1)"/><path d="M880 540 Q960 490 1080 540" fill="none" stroke="#3a3a3a" stroke-width="34" stroke-linecap="round" stroke-linejoin="round" filter="url(#b1)"/><ellipse cx="1010" cy="600" rx="80" ry="40" fill="#b0b0b0" filter="url(#b1)"/><ellipse cx="1205" cy="850" rx="115" ry="130" fill="#c6c6c6" transform="rotate(-15 1205 850)" filter="url(#b1)"/><path d="M1120 800 Q1200 790 1280 890 M1115 890 Q1200 850 1270 790 M1180 745 Q1210 860 1220 955 M1120 845 L1290 845" fill="none" stroke="#6a6a6a" stroke-width="8" stroke-linecap="round" stroke-linejoin="round" filter="url(#b1)"/><ellipse cx="1350" cy="840" rx="22" ry="26" fill="#0a0a0a" filter="url(#b0)"/><path d="M960 690 L1075 680 L1090 880 L1050 1050 L940 1440 L860 1440 L980 1050 L960 880 Z" fill="#b8b8b8" filter="url(#b1)"/><ellipse cx="780" cy="730" rx="130" ry="60" fill="#030303" transform="rotate(12 780 730)" filter="url(#b1)"/><path d="M880 900 L800 1100 L760 1440" fill="none" stroke="#080808" stroke-width="40" stroke-linecap="round" stroke-linejoin="round" filter="url(#b1)"/><ellipse cx="360" cy="740" rx="120" ry="70" fill="#5a5a5a" transform="rotate(-25 360 740)" filter="url(#b2)"/><ellipse cx="560" cy="720" rx="90" ry="45" fill="#6a6a6a" transform="rotate(20 560 720)" filter="url(#b1)"/><ellipse cx="520" cy="680" rx="40" ry="22" fill="#1a1a1a" transform="rotate(20 520 680)" filter="url(#b0)"/><path d="M560 850 L820 830" fill="none" stroke="#777" stroke-width="40" stroke-linecap="round" stroke-linejoin="round" filter="url(#b2)"/><ellipse cx="500" cy="1165" rx="265" ry="255" fill="#585858" filter="url(#b1)"/><ellipse cx="500" cy="1165" rx="265" ry="255" fill="#000" filter="url(#tx)" opacity="0.2"/><path d="M370 1060 L340 1220" fill="none" stroke="#151515" stroke-width="22" stroke-linecap="round" stroke-linejoin="round" filter="url(#b1)"/><path d="M700 960 Q770 1060 740 1160" fill="none" stroke="#9a9a9a" stroke-width="22" stroke-linecap="round" stroke-linejoin="round" filter="url(#b1)"/><path d="M1150 1100 L1080 1440" fill="none" stroke="#404040" stroke-width="170" stroke-linecap="butt" stroke-linejoin="round" filter="url(#b2)"/><path d="M1110 1195 L1200 1210" fill="none" stroke="#aaa" stroke-width="18" stroke-linecap="round" stroke-linejoin="round" filter="url(#b0)"/><path d="M860 1100 L800 1440" fill="none" stroke="#4a4a4a" stroke-width="70" stroke-linecap="butt" stroke-linejoin="round" filter="url(#b2)"/></g></g></g>
<g transform="scale(0.87 1)" font-size="7.8" fill="#f2f2f2" stroke="#f2f2f2" stroke-width=".22"><text x="1.3" y="9.0">Ser: 5</text><text x="1.3" y="17.9">SAG T2 FLAIR FS 3D 0.9 ISO</text><text x="1.3" y="26.9">MR</text><text x="1.3" y="35.9">89/176</text><text x="295.7" y="9" text-anchor="end">Zoom: 63 %</text><text x="1.3" y="160.4">L: 217</text><text x="1.3" y="169.4">W: 498</text><text x="1.3" y="187.5">512x512 px</text><text x="1.3" y="196.5">0.461x0.461 mm/px</text><text x="1.3" y="205.4">Thk: 0.900 mm</text><text x="282.0" y="181" text-anchor="middle">H</text><text x="273.6" y="190" text-anchor="middle">A</text><text x="290.8" y="190" text-anchor="middle">P</text><text x="282.0" y="199" text-anchor="middle">F</text></g>
<rect x="260.4" y="0" width="8.6" height="208.60000000000002" fill="url(#sbg)"/><rect x="260.4" y="0" width="8.6" height="8.6" fill="#858c94"/><path d="M262.5 6 L264.7 3 L266.9 6 Z" fill="#eef0f2"/><rect x="260.4" y="198.20000000000002" width="8.6" height="8.6" fill="#858c94"/><path d="M262.5 200.8 L264.7 203.8 L266.9 200.8 Z" fill="#eef0f2"/><rect x="260.7" y="93" width="8.0" height="20" fill="url(#sbt)"/><path d="M262.29999999999995 101.5 h4.8 M262.29999999999995 103.0 h4.8 M262.29999999999995 104.5 h4.8" stroke="#d4d8dc" stroke-width=".6"/>
<rect x="0" y="206.8" width="260.4" height="1.8" fill="#6c6c6c"/>
</g>
<clipPath id="c11"><rect x="0" y="0" width="260.4" height="206.8"/></clipPath>
<g transform="translate(271.5,208.9)">
<g clip-path="url(#c11)"><g transform="scale(0.15013) translate(-27.3,-33.3)"><path d="M430 850 L1370 850 L1385 1050 L1290 1110 L1250 1440 L560 1440 L540 1110 L425 1050 Z" fill="#232323" filter="url(#b2)"/><path d="M430 850 L1370 850 L1385 1050 L1290 1110 L1250 1440 L560 1440 L540 1110 L425 1050 Z" fill="#fff" filter="url(#tx2)" opacity="0.09"/><path d="M455 900 Q420 560 560 350 Q720 150 900 150 Q1080 150 1240 350 Q1380 560 1345 900" fill="none" stroke="#4b4b4b" stroke-width="56" stroke-linecap="round" stroke-linejoin="round" filter="url(#b1)"/><path d="M510 650 Q500 380 700 270 Q820 220 890 250 L905 250 Q980 220 1100 270 Q1300 380 1290 650 Q1290 810 1120 840 Q1000 800 960 720 L840 720 Q780 800 680 840 Q510 810 510 650 Z" fill="#adadad" filter="url(#b1)"/><path d="M510 650 Q500 380 700 270 Q820 220 890 250 L905 250 Q980 220 1100 270 Q1300 380 1290 650 Q1290 810 1120 840 Q1000 800 960 720 L840 720 Q780 800 680 840 Q510 810 510 650 Z" fill="#000" filter="url(#tx)" opacity="0.2"/><path d="M895 250 L895 440" fill="none" stroke="#333" stroke-width="10" stroke-linecap="round" stroke-linejoin="round" filter="url(#b0)"/><path d="M822 480 L900 565 L978 480 Z" fill="#0c0c0c" filter="url(#b0)"/><path d="M900 565 L898 690" fill="none" stroke="#141414" stroke-width="16" stroke-linecap="round" stroke-linejoin="round" filter="url(#b0)"/><path d="M620 620 L650 660 M1180 620 L1140 660" fill="none" stroke="#1c1c1c" stroke-width="16" stroke-linecap="round" stroke-linejoin="round" filter="url(#b0)"/><path d="M800 690 L990 690" fill="none" stroke="#d8d8d8" stroke-width="14" stroke-linecap="round" stroke-linejoin="round" filter="url(#b1)"/><ellipse cx="895" cy="760" rx="70" ry="50" fill="#4a4a4a" filter="url(#b1)"/><path d="M440 1030 L520 1060 M1290 1060 L1370 1030" fill="none" stroke="#b5b5b5" stroke-width="34" stroke-linecap="round" stroke-linejoin="round" filter="url(#b1)"/><ellipse cx="910" cy="1290" rx="38" ry="60" fill="#e2e2e2" filter="url(#b1)"/><path d="M600 1000 L640 1440 M1200 1000 L1170 1440" fill="none" stroke="#5a5a5a" stroke-width="60" stroke-linecap="round" stroke-linejoin="round" filter="url(#b2)"/></g></g>
<g transform="scale(0.87 1)" font-size="7.8" fill="#f2f2f2" stroke="#f2f2f2" stroke-width=".22"><text x="1.3" y="9.0">Ser: 6</text><text x="1.3" y="17.9">SAG T2 FLAIR FS 3D 0.9 ISO_MPR_cor</text><text x="1.3" y="26.9">MR</text><text x="1.3" y="35.9">12/20</text><text x="295.7" y="9" text-anchor="end">Zoom: 65 %</text><text x="1.3" y="160.4">L: 229</text><text x="1.3" y="169.4">W: 513</text><text x="1.3" y="187.5">499x499 px</text><text x="1.3" y="196.5">0.461x0.461 mm/px</text><text x="1.3" y="205.4">Thk: 5.000 mm</text><text x="282.0" y="181" text-anchor="middle">H</text><text x="273.6" y="190" text-anchor="middle">R</text><text x="290.8" y="190" text-anchor="middle">L</text><text x="282.0" y="199" text-anchor="middle">F</text></g>
<rect x="260.4" y="0" width="8.6" height="208.60000000000002" fill="url(#sbg)"/><rect x="260.4" y="0" width="8.6" height="8.6" fill="#858c94"/><path d="M262.5 6 L264.7 3 L266.9 6 Z" fill="#eef0f2"/><rect x="260.4" y="198.20000000000002" width="8.6" height="8.6" fill="#858c94"/><path d="M262.5 200.8 L264.7 203.8 L266.9 200.8 Z" fill="#eef0f2"/><rect x="260.7" y="78" width="8.0" height="66" fill="url(#sbt)"/><path d="M262.29999999999995 109.5 h4.8 M262.29999999999995 111.0 h4.8 M262.29999999999995 112.5 h4.8" stroke="#d4d8dc" stroke-width=".6"/>
<rect x="0" y="206.8" width="260.4" height="1.8" fill="#6c6c6c"/>
<rect x="-1.2" y="-1" width="261.59999999999997" height="208.60000000000002" fill="none" stroke="#a0a0a0" stroke-width="1.6"/>
</g>
<clipPath id="c12"><rect x="0" y="0" width="260.4" height="206.8"/></clipPath>
<g transform="translate(543.9,208.9)">
<g clip-path="url(#c12)"><g transform="scale(0.15013) translate(-30.0,-33.3)"><ellipse cx="895" cy="765" rx="472" ry="622" fill="#404040" filter="url(#b1)"/><ellipse cx="895" cy="765" rx="438" ry="588" fill="#080808" filter="url(#b1)"/><path d="M500 820 Q500 600 600 470 Q640 400 720 400 L800 330 L880 320 L900 330 L990 330 L1080 400 Q1150 400 1190 470 Q1290 600 1290 820 Q1290 1100 1130 1230 Q1000 1320 920 1280 L880 1280 Q800 1320 660 1230 Q500 1100 500 820 Z" fill="#a9a9a9" filter="url(#b1)"/><path d="M500 820 Q500 600 600 470 Q640 400 720 400 L800 330 L880 320 L900 330 L990 330 L1080 400 Q1150 400 1190 470 Q1290 600 1290 820 Q1290 1100 1130 1230 Q1000 1320 920 1280 L880 1280 Q800 1320 660 1230 Q500 1100 500 820 Z" fill="#000" filter="url(#tx)" opacity="0.2"/><ellipse cx="690" cy="330" rx="120" ry="90" fill="#383838" filter="url(#b2)"/><ellipse cx="1110" cy="330" rx="120" ry="90" fill="#383838" filter="url(#b2)"/><ellipse cx="890" cy="230" rx="110" ry="95" fill="#030303" filter="url(#b1)"/><path d="M890 330 L890 880" fill="none" stroke="#2a2a2a" stroke-width="14" stroke-linecap="round" stroke-linejoin="round" filter="url(#b0)"/><ellipse cx="890" cy="940" rx="50" ry="95" fill="#242424" filter="url(#b1)"/><ellipse cx="735" cy="965" rx="18" ry="48" fill="#161616" transform="rotate(-10 735 965)" filter="url(#b0)"/><ellipse cx="1055" cy="965" rx="18" ry="48" fill="#161616" transform="rotate(10 1055 965)" filter="url(#b0)"/><ellipse cx="800" cy="720" rx="60" ry="95" fill="#8e8e8e" transform="rotate(20 800 720)" filter="url(#b1)"/><ellipse cx="985" cy="720" rx="60" ry="95" fill="#8e8e8e" transform="rotate(-20 985 720)" filter="url(#b1)"/><path d="M620 600 L640 700 M1150 600 L1130 700" fill="none" stroke="#333" stroke-width="14" stroke-linecap="round" stroke-linejoin="round" filter="url(#b0)"/></g></g>
<g transform="scale(0.87 1)" font-size="7.8" fill="#f2f2f2" stroke="#f2f2f2" stroke-width=".22"><text x="1.3" y="9.0">Ser: 7</text><text x="1.3" y="17.9">SAG T2 FLAIR FS 3D 0.9 ISO_MPR_tra</text><text x="1.3" y="26.9">MR</text><text x="1.3" y="35.9">11/20</text><text x="295.7" y="9" text-anchor="end">Zoom: 65 %</text><text x="1.3" y="160.4">L: 257</text><text x="1.3" y="169.4">W: 553</text><text x="1.3" y="187.5">499x499 px</text><text x="1.3" y="196.5">0.461x0.461 mm/px</text><text x="1.3" y="205.4">Thk: 5.000 mm</text><text x="282.0" y="181" text-anchor="middle">A</text><text x="273.6" y="190" text-anchor="middle">R</text><text x="290.8" y="190" text-anchor="middle">L</text><text x="282.0" y="199" text-anchor="middle">P</text></g>
<rect x="260.4" y="0" width="8.6" height="208.60000000000002" fill="url(#sbg)"/><rect x="260.4" y="0" width="8.6" height="8.6" fill="#858c94"/><path d="M262.5 6 L264.7 3 L266.9 6 Z" fill="#eef0f2"/><rect x="260.4" y="198.20000000000002" width="8.6" height="8.6" fill="#858c94"/><path d="M262.5 200.8 L264.7 203.8 L266.9 200.8 Z" fill="#eef0f2"/><rect x="260.7" y="74" width="8.0" height="65" fill="url(#sbt)"/><path d="M262.29999999999995 105.0 h4.8 M262.29999999999995 106.5 h4.8 M262.29999999999995 108.0 h4.8" stroke="#d4d8dc" stroke-width=".6"/>
<rect x="0" y="206.8" width="260.4" height="1.8" fill="#6c6c6c"/>
</g>
<clipPath id="c13"><rect x="0" y="0" width="260.4" height="206.8"/></clipPath>
<g transform="translate(816.2,208.9)">
<g clip-path="url(#c13)"><g transform="scale(0.15013) translate(-32.0,-33.3)"><g transform="translate(-5,25)"><path d="M420 480 C481 384 469 365 560 280 C651 195 643 205 760 160 C877 115 869 113 1000 110 C1131 107 1135 110 1250 150 C1365 190 1353 172 1430 260 C1507 348 1499 349 1540 480 C1581 611 1585 638 1585 750 C1585 862 1589 817 1540 900 C1491 983 1475 991 1400 1060 C1325 1129 1304 1096 1260 1160 C1216 1224 1248 1225 1235 1300 C1222 1375 1451 1403 1210 1440 C969 1477 583 1477 330 1440 C77 1403 284 1377 260 1300 C236 1223 229 1217 240 1150 C251 1083 292 1090 300 1050 C308 1010 270 1053 270 1000 C270 947 316 901 300 850 C284 799 237 834 210 810 C183 786 168 805 200 760 C232 715 271 715 330 640 C389 565 359 576 420 480 Z" fill="#343434" filter="url(#b1)"/><path d="M500 520 C520 485 557 384 610 330 C663 276 718 252 790 225 C862 198 919 182 1000 180 C1081 178 1158 190 1230 215 C1302 240 1344 263 1390 315 C1436 367 1457 420 1480 500 C1503 580 1516 680 1515 750 C1514 820 1505 832 1475 880 C1445 928 1373 986 1350 1010" fill="none" stroke="#0a0a0a" stroke-width="26" stroke-linecap="round" stroke-linejoin="round" filter="url(#b1)"/><path d="M600 560 Q600 390 760 290 Q930 210 1150 240 Q1400 300 1455 560 Q1490 760 1400 880 L1290 760 L1150 650 L1010 640 Q860 640 790 600 L700 640 Q610 620 600 560 Z" fill="#929292" filter="url(#b1)"/><path d="M600 560 Q600 390 760 290 Q930 210 1150 240 Q1400 300 1455 560 Q1490 760 1400 880 L1290 760 L1150 650 L1010 640 Q860 640 790 600 L700 640 Q610 620 600 560 Z" fill="#000" filter="url(#tx)" opacity="0.28"/><path d="M795 540 Q820 440 980 440 Q1160 460 1180 560 Q1175 610 1140 630" fill="none" stroke="#a4a4a4" stroke-width="46" stroke-linecap="round" stroke-linejoin="round" filter="url(#b1)"/><path d="M880 540 Q960 490 1080 540" fill="none" stroke="#3a3a3a" stroke-width="34" stroke-linecap="round" stroke-linejoin="round" filter="url(#b1)"/><ellipse cx="1010" cy="600" rx="80" ry="40" fill="#b0b0b0" filter="url(#b1)"/><ellipse cx="1205" cy="850" rx="115" ry="130" fill="#b0b0b0" transform="rotate(-15 1205 850)" filter="url(#b1)"/><path d="M1120 800 Q1200 790 1280 890 M1115 890 Q1200 850 1270 790 M1180 745 Q1210 860 1220 955 M1120 845 L1290 845" fill="none" stroke="#6a6a6a" stroke-width="8" stroke-linecap="round" stroke-linejoin="round" filter="url(#b1)"/><ellipse cx="1350" cy="840" rx="22" ry="26" fill="#0a0a0a" filter="url(#b0)"/><path d="M960 690 L1075 680 L1090 880 L1050 1050 L940 1440 L860 1440 L980 1050 L960 880 Z" fill="#b4b4b4" filter="url(#b1)"/><ellipse cx="780" cy="730" rx="130" ry="60" fill="#030303" transform="rotate(12 780 730)" filter="url(#b1)"/><path d="M880 900 L800 1100 L760 1440" fill="none" stroke="#080808" stroke-width="40" stroke-linecap="round" stroke-linejoin="round" filter="url(#b1)"/><ellipse cx="360" cy="740" rx="120" ry="70" fill="#5a5a5a" transform="rotate(-25 360 740)" filter="url(#b2)"/><ellipse cx="560" cy="720" rx="90" ry="45" fill="#6a6a6a" transform="rotate(20 560 720)" filter="url(#b1)"/><ellipse cx="520" cy="680" rx="40" ry="22" fill="#1a1a1a" transform="rotate(20 520 680)" filter="url(#b0)"/><path d="M560 850 L820 830" fill="none" stroke="#777" stroke-width="40" stroke-linecap="round" stroke-linejoin="round" filter="url(#b2)"/><ellipse cx="500" cy="1165" rx="265" ry="255" fill="#585858" filter="url(#b1)"/><ellipse cx="500" cy="1165" rx="265" ry="255" fill="#000" filter="url(#tx)" opacity="0.2"/><path d="M370 1060 L340 1220" fill="none" stroke="#151515" stroke-width="22" stroke-linecap="round" stroke-linejoin="round" filter="url(#b1)"/><path d="M700 960 Q770 1060 740 1160" fill="none" stroke="#9a9a9a" stroke-width="22" stroke-linecap="round" stroke-linejoin="round" filter="url(#b1)"/><path d="M1150 1100 L1080 1440" fill="none" stroke="#404040" stroke-width="170" stroke-linecap="butt" stroke-linejoin="round" filter="url(#b2)"/><path d="M1110 1195 L1200 1210" fill="none" stroke="#aaa" stroke-width="18" stroke-linecap="round" stroke-linejoin="round" filter="url(#b0)"/><path d="M860 1100 L800 1440" fill="none" stroke="#4a4a4a" stroke-width="70" stroke-linecap="butt" stroke-linejoin="round" filter="url(#b2)"/></g></g></g>
<g transform="scale(0.87 1)" font-size="7.8" fill="#f2f2f2" stroke="#f2f2f2" stroke-width=".22"><text x="1.3" y="9.0">Ser: 8</text><text x="1.3" y="17.9">SAG T2 FLAIR FS 3D 0.9 ISO_MPR_SAG</text><text x="1.3" y="26.9">MR</text><text x="1.3" y="35.9">11/20</text><text x="295.7" y="9" text-anchor="end">Zoom: 62 %</text><text x="1.3" y="160.4">L: 218</text><text x="1.3" y="169.4">W: 496</text><text x="1.3" y="187.5">521x521 px</text><text x="1.3" y="196.5">0.461x0.461 mm/px</text><text x="1.3" y="205.4">Thk: 5.000 mm</text><text x="282.0" y="181" text-anchor="middle">H</text><text x="273.6" y="190" text-anchor="middle">A</text><text x="290.8" y="190" text-anchor="middle">P</text><text x="282.0" y="199" text-anchor="middle">F</text></g>
<rect x="260.4" y="0" width="8.6" height="208.60000000000002" fill="url(#sbg)"/><rect x="260.4" y="0" width="8.6" height="8.6" fill="#858c94"/><path d="M262.5 6 L264.7 3 L266.9 6 Z" fill="#eef0f2"/><rect x="260.4" y="198.20000000000002" width="8.6" height="8.6" fill="#858c94"/><path d="M262.5 200.8 L264.7 203.8 L266.9 200.8 Z" fill="#eef0f2"/><rect x="260.7" y="74" width="8.0" height="65" fill="url(#sbt)"/><path d="M262.29999999999995 105.0 h4.8 M262.29999999999995 106.5 h4.8 M262.29999999999995 108.0 h4.8" stroke="#d4d8dc" stroke-width=".6"/>
<rect x="0" y="206.8" width="260.4" height="1.8" fill="#6c6c6c"/>
</g>
<clipPath id="c20"><rect x="0" y="0" width="260.4" height="206.0"/></clipPath>
<g transform="translate(0,417.5)">
<g clip-path="url(#c20)"><g transform="scale(0.15013) translate(-30.6,-37.3)"><ellipse cx="890" cy="748" rx="492" ry="648" fill="#3c3c3c" filter="url(#b1)"/><ellipse cx="890" cy="748" rx="456" ry="612" fill="#080808" filter="url(#b1)"/><path d="M475 800 Q475 560 580 420 L660 380 L740 330 L820 270 L900 290 L960 290 L1060 340 L1150 380 L1220 430 Q1315 580 1315 800 Q1315 1080 1160 1220 Q1030 1320 930 1290 L880 1290 Q770 1320 640 1220 Q475 1080 475 800 Z" fill="#c2c2c2" filter="url(#b1)"/><path d="M475 800 Q475 560 580 420 L660 380 L740 330 L820 270 L900 290 L960 290 L1060 340 L1150 380 L1220 430 Q1315 580 1315 800 Q1315 1080 1160 1220 Q1030 1320 930 1290 L880 1290 Q770 1320 640 1220 Q475 1080 475 800 Z" fill="#000" filter="url(#tx)" opacity="0.16"/><ellipse cx="890" cy="820" rx="230" ry="260" fill="#e6e6e6" filter="url(#b3)" opacity="0.8"/><ellipse cx="735" cy="965" rx="28" ry="60" fill="#fafafa" transform="rotate(-15 735 965)" filter="url(#b0)"/><ellipse cx="1060" cy="965" rx="28" ry="60" fill="#fafafa" transform="rotate(15 1060 965)" filter="url(#b0)"/><path d="M850 930 L895 1040 L940 930" fill="none" stroke="#f4f4f4" stroke-width="18" stroke-linecap="round" stroke-linejoin="round" filter="url(#b0)"/><ellipse cx="893" cy="860" rx="12" ry="12" fill="#111" filter="url(#b0)"/><ellipse cx="900" cy="1055" rx="9" ry="9" fill="#222" filter="url(#b0)"/><ellipse cx="790" cy="690" rx="50" ry="80" fill="#a8a8a8" transform="rotate(35 790 690)" filter="url(#b1)"/><ellipse cx="1000" cy="690" rx="50" ry="80" fill="#a8a8a8" transform="rotate(-35 1000 690)" filter="url(#b1)"/><path d="M900 1060 L895 1270" fill="none" stroke="#777" stroke-width="8" stroke-linecap="round" stroke-linejoin="round" filter="url(#b0)"/><ellipse cx="890" cy="200" rx="280" ry="70" fill="#121212" filter="url(#b2)"/></g></g>
<g transform="scale(0.87 1)" font-size="7.8" fill="#f2f2f2" stroke="#f2f2f2" stroke-width=".22"><text x="1.3" y="9.0">Ser: 9</text><text x="1.3" y="17.9">AX T2 EG HR</text><text x="1.3" y="26.9">MR</text><text x="1.3" y="35.9">21/40</text><text x="295.7" y="9" text-anchor="end">Zoom: 101 %</text><text x="1.3" y="160.4">L: 761</text><text x="1.3" y="169.4">W: 1542</text><text x="1.3" y="187.5">320x320 px</text><text x="1.3" y="196.5">0.688x0.688 mm/px</text><text x="1.3" y="205.4">Thk: 3.000 mm</text><text x="282.0" y="181" text-anchor="middle">A</text><text x="273.6" y="190" text-anchor="middle">R</text><text x="290.8" y="190" text-anchor="middle">L</text><text x="282.0" y="199" text-anchor="middle">P</text></g>
<rect x="260.4" y="0" width="8.6" height="207.8" fill="url(#sbg)"/><rect x="260.4" y="0" width="8.6" height="8.6" fill="#858c94"/><path d="M262.5 6 L264.7 3 L266.9 6 Z" fill="#eef0f2"/><rect x="260.4" y="197.4" width="8.6" height="8.6" fill="#858c94"/><path d="M262.5 200.0 L264.7 203.0 L266.9 200.0 Z" fill="#eef0f2"/><rect x="260.7" y="87" width="8.0" height="36" fill="url(#sbt)"/><path d="M262.29999999999995 103.5 h4.8 M262.29999999999995 105.0 h4.8 M262.29999999999995 106.5 h4.8" stroke="#d4d8dc" stroke-width=".6"/>
</g>
<clipPath id="c21"><rect x="0" y="0" width="260.4" height="206.0"/></clipPath>
<g transform="translate(271.5,417.5)">
<g clip-path="url(#c21)"><g transform="scale(0.15013) translate(-27.3,-37.3)"><ellipse cx="895" cy="762" rx="487" ry="618" fill="#cfcfcf" transform="rotate(-6 895 762)" filter="url(#b1)"/><ellipse cx="895" cy="762" rx="461" ry="592" fill="#1a1a1a" transform="rotate(-6 895 762)" filter="url(#b1)"/><ellipse cx="895" cy="768" rx="443" ry="574" fill="#8c8c8c" transform="rotate(-6 895 768)" filter="url(#b1)"/><ellipse cx="895" cy="770" rx="425" ry="556" fill="#060606" transform="rotate(-6 895 770)" filter="url(#b1)"/><path d="M500 800 Q495 560 585 410 L650 370 L720 300 L860 285 L960 290 L1100 320 L1160 380 Q1300 560 1300 800 Q1300 1060 1160 1200 Q1030 1300 930 1270 L890 1270 Q790 1300 680 1200 Q500 1060 500 800 Z" fill="#9d9d9d" filter="url(#b1)"/><path d="M500 800 Q495 560 585 410 L650 370 L720 300 L860 285 L960 290 L1100 320 L1160 380 Q1300 560 1300 800 Q1300 1060 1160 1200 Q1030 1300 930 1270 L890 1270 Q790 1300 680 1200 Q500 1060 500 800 Z" fill="#000" filter="url(#tx)" opacity="0.2"/><ellipse cx="890" cy="760" rx="210" ry="230" fill="#b4b4b4" filter="url(#b3)" opacity="0.7"/><path d="M880 670 L888 830" fill="none" stroke="#222" stroke-width="16" stroke-linecap="round" stroke-linejoin="round" filter="url(#b0)"/><ellipse cx="893" cy="950" rx="42" ry="85" fill="#2a2a2a" filter="url(#b1)"/><ellipse cx="742" cy="955" rx="18" ry="50" fill="#1c1c1c" transform="rotate(-12 742 955)" filter="url(#b0)"/><ellipse cx="1062" cy="955" rx="18" ry="50" fill="#1c1c1c" transform="rotate(12 1062 955)" filter="url(#b0)"/><path d="M890 1250 L925 1190 L960 1250 Z" fill="#f0f0f0" filter="url(#b0)"/><path d="M560 560 L640 620 M1120 560 L1180 600" fill="none" stroke="#e0e0e0" stroke-width="12" stroke-linecap="round" stroke-linejoin="round" filter="url(#b0)"/></g></g>
<g transform="scale(0.87 1)" font-size="7.8" fill="#f2f2f2" stroke="#f2f2f2" stroke-width=".22"><text x="1.3" y="9.0">Ser: 10</text><text x="1.3" y="17.9">AX T1 MPRAGE FS GADO</text><text x="1.3" y="26.9">MR</text><text x="1.3" y="35.9">97/192</text><text x="295.7" y="9" text-anchor="end">Zoom: 63 %</text><text x="1.3" y="160.4">L: 630</text><text x="1.3" y="169.4">W: 1273</text><text x="1.3" y="187.5">512x512 px</text><text x="1.3" y="196.5">0.449x0.449 mm/px</text><text x="1.3" y="205.4">Thk: 0.900 mm</text><text x="282.0" y="181" text-anchor="middle">A</text><text x="273.6" y="190" text-anchor="middle">R</text><text x="290.8" y="190" text-anchor="middle">L</text><text x="282.0" y="199" text-anchor="middle">P</text></g>
<rect x="260.4" y="0" width="8.6" height="207.8" fill="url(#sbg)"/><rect x="260.4" y="0" width="8.6" height="8.6" fill="#858c94"/><path d="M262.5 6 L264.7 3 L266.9 6 Z" fill="#eef0f2"/><rect x="260.4" y="197.4" width="8.6" height="8.6" fill="#858c94"/><path d="M262.5 200.0 L264.7 203.0 L266.9 200.0 Z" fill="#eef0f2"/><rect x="260.7" y="96" width="8.0" height="17" fill="url(#sbt)"/><path d="M262.29999999999995 103.0 h4.8 M262.29999999999995 104.5 h4.8 M262.29999999999995 106.0 h4.8" stroke="#d4d8dc" stroke-width=".6"/>
</g>
<clipPath id="c22"><rect x="0" y="0" width="260.4" height="206.0"/></clipPath>
<g transform="translate(543.9,417.5)">
<g clip-path="url(#c22)"><g transform="scale(0.15013) translate(-30.0,-37.3)"><path d="M420 830 L1400 830 L1390 1000 L1300 1100 L1150 1185 L660 1185 L500 1100 L425 1000 Z" fill="#222" filter="url(#b2)"/><path d="M420 830 L1400 830 L1390 1000 L1300 1100 L1150 1185 L660 1185 L500 1100 L425 1000 Z" fill="#fff" filter="url(#tx2)" opacity="0.13"/><ellipse cx="900" cy="1030" rx="90" ry="130" fill="#0c0c0c" filter="url(#b2)"/><ellipse cx="893" cy="805" rx="115" ry="75" fill="#777" filter="url(#b2)"/><path d="M440 900 Q400 560 540 350 Q710 150 900 148 Q1090 150 1260 350 Q1400 560 1370 900" fill="none" stroke="#c4c4c4" stroke-width="30" stroke-linecap="round" stroke-linejoin="round" filter="url(#b1)"/><path d="M478 860 Q445 560 575 372 Q730 190 900 188 Q1070 190 1225 372 Q1355 560 1330 860" fill="none" stroke="#8a8a8a" stroke-width="14" stroke-linecap="round" stroke-linejoin="round" filter="url(#b0)"/><path d="M492 650 Q485 390 690 270 Q810 205 890 220 Q975 205 1100 270 Q1305 390 1300 650 Q1300 800 1130 835 Q1010 800 970 730 L820 730 Q770 800 660 835 Q492 800 492 650 Z" fill="#9c9c9c" filter="url(#b1)"/><path d="M492 650 Q485 390 690 270 Q810 205 890 220 Q975 205 1100 270 Q1305 390 1300 650 Q1300 800 1130 835 Q1010 800 970 730 L820 730 Q770 800 660 835 Q492 800 492 650 Z" fill="#000" filter="url(#tx)" opacity="0.2"/><path d="M812 482 L890 545 L968 482 L900 510 Z" fill="#1a1a1a" stroke="#1a1a1a" stroke-width="14" stroke-linecap="round" stroke-linejoin="round" filter="url(#b0)"/><path d="M890 590 L890 690" fill="none" stroke="#1e1e1e" stroke-width="16" stroke-linecap="round" stroke-linejoin="round" filter="url(#b0)"/><path d="M800 752 L890 737 L985 752 M890 737 L890 920 L835 965 M890 920 L950 965" fill="none" stroke="#f4f4f4" stroke-width="15" stroke-linecap="round" stroke-linejoin="round" filter="url(#b0)"/><ellipse cx="715" cy="985" rx="65" ry="38" fill="#f4f4f4" transform="rotate(-38 715 985)" filter="url(#b1)"/><ellipse cx="1065" cy="965" rx="60" ry="36" fill="#f4f4f4" transform="rotate(35 1065 965)" filter="url(#b1)"/><ellipse cx="450" cy="870" rx="30" ry="60" fill="#999" filter="url(#b1)"/><ellipse cx="1365" cy="860" rx="30" ry="60" fill="#999" filter="url(#b1)"/></g></g>
<g transform="scale(0.87 1)" font-size="7.8" fill="#f2f2f2" stroke="#f2f2f2" stroke-width=".22"><text x="1.3" y="9.0">Ser: 11</text><text x="1.3" y="17.9">AX T1 MPRAGE FS GADO_MPR_cor</text><text x="1.3" y="26.9">MR</text><text x="1.3" y="35.9">11/20</text><text x="295.7" y="9" text-anchor="end">Zoom: 63 %</text><text x="1.3" y="160.4">L: 644</text><text x="1.3" y="169.4">W: 1314</text><text x="1.3" y="187.5">512x512 px</text><text x="1.3" y="196.5">0.449x0.449 mm/px</text><text x="1.3" y="205.4">Thk: 5.000 mm</text><text x="282.0" y="181" text-anchor="middle">H</text><text x="273.6" y="190" text-anchor="middle">R</text><text x="290.8" y="190" text-anchor="middle">L</text><text x="282.0" y="199" text-anchor="middle">F</text></g>
<rect x="260.4" y="0" width="8.6" height="207.8" fill="url(#sbg)"/><rect x="260.4" y="0" width="8.6" height="8.6" fill="#858c94"/><path d="M262.5 6 L264.7 3 L266.9 6 Z" fill="#eef0f2"/><rect x="260.4" y="197.4" width="8.6" height="8.6" fill="#858c94"/><path d="M262.5 200.0 L264.7 203.0 L266.9 200.0 Z" fill="#eef0f2"/><rect x="260.7" y="73" width="8.0" height="65" fill="url(#sbt)"/><path d="M262.29999999999995 104.0 h4.8 M262.29999999999995 105.5 h4.8 M262.29999999999995 107.0 h4.8" stroke="#d4d8dc" stroke-width=".6"/>
</g>
<clipPath id="c23"><rect x="0" y="0" width="260.4" height="206.0"/></clipPath>
<g transform="translate(816.2,417.5)">
<g clip-path="url(#c23)"><g transform="scale(0.15013) translate(-32.0,-37.3)"><ellipse cx="895" cy="772" rx="487" ry="626" fill="#cfcfcf" transform="rotate(-6 895 772)" filter="url(#b1)"/><ellipse cx="895" cy="772" rx="461" ry="600" fill="#1a1a1a" transform="rotate(-6 895 772)" filter="url(#b1)"/><ellipse cx="895" cy="778" rx="443" ry="582" fill="#8c8c8c" transform="rotate(-6 895 778)" filter="url(#b1)"/><ellipse cx="895" cy="780" rx="425" ry="564" fill="#060606" transform="rotate(-6 895 780)" filter="url(#b1)"/><path d="M495 810 Q490 580 580 440 L640 380 L720 330 L800 340 L880 330 L980 330 L1060 340 L1150 390 Q1295 580 1300 810 Q1300 1070 1160 1210 Q1030 1310 930 1280 L890 1280 Q790 1310 680 1210 Q495 1070 495 810 Z" fill="#9d9d9d" filter="url(#b1)"/><path d="M495 810 Q490 580 580 440 L640 380 L720 330 L800 340 L880 330 L980 330 L1060 340 L1150 390 Q1295 580 1300 810 Q1300 1070 1160 1210 Q1030 1310 930 1280 L890 1280 Q790 1310 680 1210 Q495 1070 495 810 Z" fill="#000" filter="url(#tx)" opacity="0.2"/><ellipse cx="890" cy="760" rx="210" ry="230" fill="#b4b4b4" filter="url(#b3)" opacity="0.7"/><ellipse cx="865" cy="232" rx="108" ry="80" fill="#020202" filter="url(#b1)"/><ellipse cx="650" cy="350" rx="60" ry="60" fill="#4a4a4a" filter="url(#b2)"/><ellipse cx="1090" cy="335" rx="60" ry="60" fill="#4a4a4a" filter="url(#b2)"/><path d="M880 640 L888 830" fill="none" stroke="#222" stroke-width="14" stroke-linecap="round" stroke-linejoin="round" filter="url(#b0)"/><ellipse cx="900" cy="960" rx="45" ry="85" fill="#2a2a2a" filter="url(#b1)"/><ellipse cx="740" cy="975" rx="18" ry="50" fill="#1c1c1c" transform="rotate(-12 740 975)" filter="url(#b0)"/><ellipse cx="1060" cy="975" rx="18" ry="50" fill="#1c1c1c" transform="rotate(12 1060 975)" filter="url(#b0)"/><path d="M880 1240 L915 1175 L950 1240 Z" fill="#f0f0f0" filter="url(#b0)"/></g></g>
<g transform="scale(0.87 1)" font-size="7.8" fill="#f2f2f2" stroke="#f2f2f2" stroke-width=".22"><text x="1.3" y="9.0">Ser: 12</text><text x="1.3" y="17.9">AX T1 MPRAGE FS GADO_MPR_tra</text><text x="1.3" y="26.9">MR</text><text x="1.3" y="35.9">11/20</text><text x="295.7" y="9" text-anchor="end">Zoom: 63 %</text><text x="1.3" y="160.4">L: 677</text><text x="1.3" y="169.4">W: 1313</text><text x="1.3" y="187.5">512x512 px</text><text x="1.3" y="196.5">0.449x0.449 mm/px</text><text x="1.3" y="205.4">Thk: 5.000 mm</text><text x="282.0" y="181" text-anchor="middle">A</text><text x="273.6" y="190" text-anchor="middle">R</text><text x="290.8" y="190" text-anchor="middle">L</text><text x="282.0" y="199" text-anchor="middle">P</text></g>
<rect x="260.4" y="0" width="8.6" height="207.8" fill="url(#sbg)"/><rect x="260.4" y="0" width="8.6" height="8.6" fill="#858c94"/><path d="M262.5 6 L264.7 3 L266.9 6 Z" fill="#eef0f2"/><rect x="260.4" y="197.4" width="8.6" height="8.6" fill="#858c94"/><path d="M262.5 200.0 L264.7 203.0 L266.9 200.0 Z" fill="#eef0f2"/><rect x="260.7" y="73" width="8.0" height="65" fill="url(#sbt)"/><path d="M262.29999999999995 104.0 h4.8 M262.29999999999995 105.5 h4.8 M262.29999999999995 107.0 h4.8" stroke="#d4d8dc" stroke-width=".6"/>
</g>
</svg>
</div>

<!-- bottom buttons -->
<div class="btn" style="left:1551.5px;top:1251.6px;width:136.4px;height:48.4px;border-color:#d3232a;line-height:45.4px;padding-left:30px"><span class="sx" style="transform:scaleX(.985)">Fermer</span></div>
<svg class="abs" style="left:1569px;top:1265px" width="22" height="22" viewBox="0 0 22 22" stroke="#d90a0a" stroke-width="4.6" stroke-linecap="round"><path d="M4.6 5 L16.6 17 M16.6 5 L4.6 17"/></svg>
<div class="btn" style="left:1707.3px;top:1251.6px;width:136.4px;height:48.4px;border-color:#92a223;line-height:45.4px;padding-left:28px"><span class="sx" style="transform:scaleX(.98)">Valider</span></div>
<svg class="abs" style="left:1723px;top:1266px" width="24" height="22" viewBox="0 0 24 22" fill="none" stroke="#8fa313" stroke-width="5" stroke-linecap="round" stroke-linejoin="round"><path d="M4.5 10.5 L9.5 15.5 L18.5 5"/></svg>

<!-- right -->
<h2 class="ttl" style="left:1980px;top:134.5px;letter-spacing:.05px">Partage et impression</h2>
<div class="hr" style="left:1980px;top:180.5px;width:550px"></div>


<!-- share -->
<svg class="abs" style="left:1972px;top:240px" width="56" height="56" viewBox="0 0 56 56" fill="none" stroke="#0c0c0c" stroke-width="3" stroke-linejoin="round">
  <path d="M15.4 24.6 V8 Q15.4 5 18.4 5 H37.6 Q40.6 5 40.6 8 V24.6"/>
  <rect x="4.6" y="24.6" width="46.6" height="20" rx="4"/>
  <rect x="15" y="38" width="26" height="12.7" fill="#fff"/>
</svg>
<div class="btn" style="left:2096.5px;top:242.5px;width:202.3px;height:48.4px;line-height:45.4px"><span class="sx" style="left:-2px">Imprimer</span></div>
<svg class="abs" style="left:1972px;top:322px" width="56" height="48" viewBox="0 0 56 48" fill="none" stroke="#0c0c0c" stroke-width="3" stroke-linejoin="round" stroke-linecap="round">
  <rect x="5.4" y="5.4" width="44.4" height="36.6" rx="2.5"/>
  <path d="M5.4 13 H49.8" stroke-width="2.6"/>
  <path d="M19 28.6 H35 M29 22.6 L35.2 28.6 L29 34.6"/>
  <circle cx="44" cy="9" r="1.2" fill="#0c0c0c" stroke="none"/>
</svg>
<div class="btn" style="left:2096.5px;top:321.4px;width:202.3px;height:48.4px;line-height:47.4px"><span class="sx">Vers Télémédica</span></div>
<svg class="abs" style="left:1972px;top:407px" width="56" height="44" viewBox="0 0 56 44" fill="none" stroke="#0c0c0c" stroke-width="3" stroke-linejoin="round">
  <rect x="5.4" y="5.4" width="44.4" height="32.6" rx="2.5"/>
  <path d="M6.4 7.4 L27.6 24.4 L48.8 7.4" stroke-width="2.8"/>
</svg>
<div class="btn" style="left:2096.5px;top:404px;width:202.3px;height:48.4px;line-height:46px"><span class="sx" style="left:1.2px">Par email</span></div>

</body>
</html>
